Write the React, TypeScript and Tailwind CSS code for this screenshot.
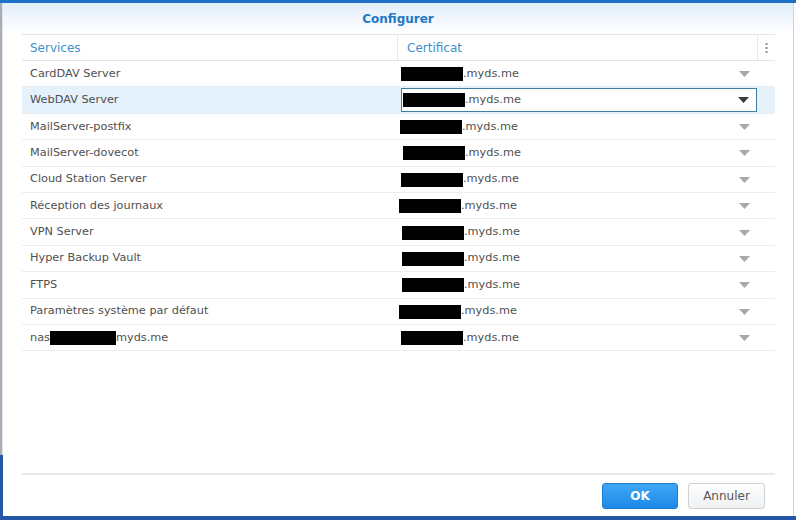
import React from "react";

type Row = { name: React.ReactNode; ml: string; selected?: boolean };

const Redact = ({ className }: { className: string }) => (
  <span className={"inline-block h-[14px] bg-black " + className} />
);

const rows: Row[] = [
  { name: "CardDAV Server", ml: "ml-[3px]" },
  { name: "WebDAV Server", ml: "ml-[2px]", selected: true },
  { name: "MailServer-postfix", ml: "ml-[2px]" },
  { name: "MailServer-dovecot", ml: "ml-[5px]" },
  { name: "Cloud Station Server", ml: "ml-[3px]" },
  { name: "Réception des journaux", ml: "ml-[1px]" },
  { name: "VPN Server", ml: "ml-[4px]" },
  { name: "Hyper Backup Vault", ml: "ml-[4px]" },
  { name: "FTPS", ml: "ml-[4px]" },
  { name: "Paramètres système par défaut", ml: "ml-[1px]" },
  {
    name: (
      <span className="flex items-center">
        nas
        <Redact className="w-[66px]" />
        myds.me
      </span>
    ),
    ml: "ml-[3px]",
  },
];

const Arrow = ({ dark }: { dark?: boolean }) => (
  <svg width="11" height="6" viewBox="0 0 11 6" className="shrink-0">
    <path d="M0 0 H11 L5.5 6 Z" fill={dark ? "#3a3a3a" : "#a8a8a8"} />
  </svg>
);

export default function App() {
  return (
    <div
      className="w-[796px] h-[520px] flex flex-col overflow-hidden bg-white text-[11.3px] text-[#505050]"
      style={{ fontFamily: '"DejaVu Sans", Verdana, sans-serif' }}
    >
      <div className="h-[3px] bg-[#1e72c6] shrink-0" />
      <div className="flex flex-1 min-h-0">
        <div className="w-[3px] flex flex-col shrink-0">
          <div className="h-[452px] flex">
            <div className="w-[2px] bg-[#a9adb3]" />
            <div className="w-[1px] bg-[#dfe3e8]" />
          </div>
          <div className="flex-1 bg-[#2656a6]" />
        </div>
        <div className="flex-1 flex flex-col bg-white">
          <div className="h-[31px] shrink-0 flex items-center justify-center bg-gradient-to-b from-[#e2eefa] to-white">
            <span className="text-[12px] font-bold text-[#1f78c6] mt-[1px]">Configurer</span>
          </div>
          <div className="pl-[19px] pr-[18px]">
            <div className="border-t border-b border-[#e2e4e6] h-[27px] flex text-[#4190cc] text-[12px]">
              <div className="w-[376px] pl-2 flex items-center border-r border-[#e6e8ea]">Services</div>
              <div className="w-[360px] pl-[9px] flex items-center border-r border-[#e6e8ea]">Certificat</div>
              <div className="flex-1 flex items-center justify-center">
                <svg width="3" height="10" viewBox="0 0 3 10">
                  <rect x="0.5" y="0" width="2" height="2" fill="#8a8f94" />
                  <rect x="0.5" y="4" width="2" height="2" fill="#8a8f94" />
                  <rect x="0.5" y="8" width="2" height="2" fill="#8a8f94" />
                </svg>
              </div>
            </div>
            {rows.map((r, i) => (
              <div
                key={i}
                className={
                  "h-[26.4px] flex border-b border-[#ebedef] " + (r.selected ? "bg-[#e5f1fb]" : "")
                }
              >
                <div className="w-[376px] pl-2 flex items-center pt-[1px]">{r.name}</div>
                <div className="w-[360px] flex items-center">
                  {r.selected ? (
                    <div className="ml-[3px] h-[24px] w-[356px] border border-[#3f7fa3] bg-white flex items-center pr-[7px]">
                      <Redact className="w-[62px] ml-[1px]" />
                      <span>.myds.me</span>
                      <span className="flex-1" />
                      <Arrow dark />
                    </div>
                  ) : (
                    <div className="w-[356px] flex items-center pr-[4px] pt-[1px]">
                      <Redact className={"w-[62px] " + r.ml} />
                      <span>.myds.me</span>
                      <span className="flex-1" />
                      <Arrow />
                    </div>
                  )}
                </div>
                <div className="flex-1" />
              </div>
            ))}
          </div>
          <div className="flex-1" />
          <div className="pl-[19px] pr-[18px]">
            <div className="h-[2px] bg-[#e8e9eb]" />
          </div>
          <div className="flex justify-end gap-[10px] pr-[28px] pt-[8px] pb-[7px]">
            <button className="w-[76px] h-[26px] rounded-[3px] border border-[#1d7fd3] bg-gradient-to-b from-[#3fa6f6] to-[#1b8ae6] text-white font-bold text-[12px]">
              OK
            </button>
            <button className="w-[77px] h-[26px] rounded-[3px] border border-[#cfd2d6] bg-gradient-to-b from-white to-[#eef0f2] text-[#555] text-[12px]">
              Annuler
            </button>
          </div>
        </div>
        <div className="w-[3px] shrink-0 bg-white border-l border-[#cfd3d8]" />
      </div>
      <div className="h-[4px] bg-[#2656a6] shrink-0" />
    </div>
  );
}
